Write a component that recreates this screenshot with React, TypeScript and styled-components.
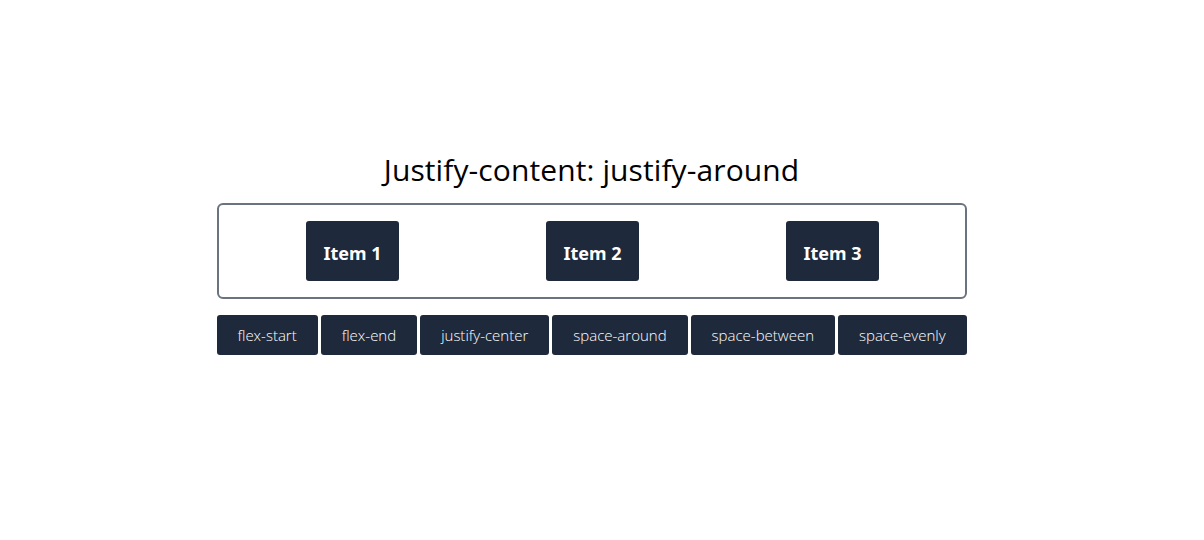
import React, { useState } from "react";
import styled, { createGlobalStyle } from "styled-components";

const GlobalStyle = createGlobalStyle`
  body {
    margin: 0;
    background: #ffffff;
    font-family: "Open Sans", "Noto Sans", sans-serif;
  }
`;

const Page = styled.div`
  display: flex;
  justify-content: center;
  padding: 150px 21px 0 0;
`;

const Wrapper = styled.div`
  width: 750px;
  display: flex;
  flex-direction: column;
  align-items: center;
`;

const Title = styled.h1`
  margin: 0 0 13px;
  font-family: "Open Sans", "Noto Sans", sans-serif;
  font-size: 30px;
  font-weight: 400;
  line-height: 40px;
  letter-spacing: 0.1px;
  color: #000000;
`;

const Box = styled.div<{ $justify: string }>`
  box-sizing: border-box;
  width: 100%;
  display: flex;
  justify-content: ${(p) => p.$justify};
  padding: 16px 12px 16px 14px;
  border: 2px solid #6b7280;
  border-radius: 6px;
`;

const Item = styled.div`
  box-sizing: border-box;
  width: 93px;
  height: 60px;
  padding-top: 3px;
  display: flex;
  align-items: center;
  justify-content: center;
  background: #1e293b;
  border-radius: 3px;
  color: #ffffff;
  font-family: "Noto Sans", "Open Sans", sans-serif;
  font-weight: 700;
  font-size: 18px;
`;

const Buttons = styled.div`
  width: 100%;
  display: flex;
  gap: 3px;
  margin-top: 16px;
`;

const Button = styled.button`
  flex: 1 1 auto;
  height: 40px;
  padding: 0 16px;
  border: none;
  border-radius: 3px;
  background: #1e293b;
  color: #ffffff;
  font-family: "Open Sans", "Noto Sans", sans-serif;
  font-weight: 300;
  font-size: 15px;
  cursor: pointer;
`;

const options = [
  { label: "flex-start", value: "flex-start", name: "justify-start" },
  { label: "flex-end", value: "flex-end", name: "justify-end" },
  { label: "justify-center", value: "center", name: "justify-center" },
  { label: "space-around", value: "space-around", name: "justify-around" },
  { label: "space-between", value: "space-between", name: "justify-between" },
  { label: "space-evenly", value: "space-evenly", name: "justify-evenly" },
];

const App = () => {
  const [current, setCurrent] = useState(options[3]);

  return (
    <React.Fragment>
      <GlobalStyle />
      <Page>
        <Wrapper>
          <Title>Justify-content: {current.name}</Title>
          <Box $justify={current.value}>
            <Item>Item 1</Item>
            <Item>Item 2</Item>
            <Item>Item 3</Item>
          </Box>
          <Buttons>
            {options.map((o) => (
              <Button key={o.value} onClick={() => setCurrent(o)}>
                {o.label}
              </Button>
            ))}
          </Buttons>
        </Wrapper>
      </Page>
    </React.Fragment>
  );
};

export default App;
